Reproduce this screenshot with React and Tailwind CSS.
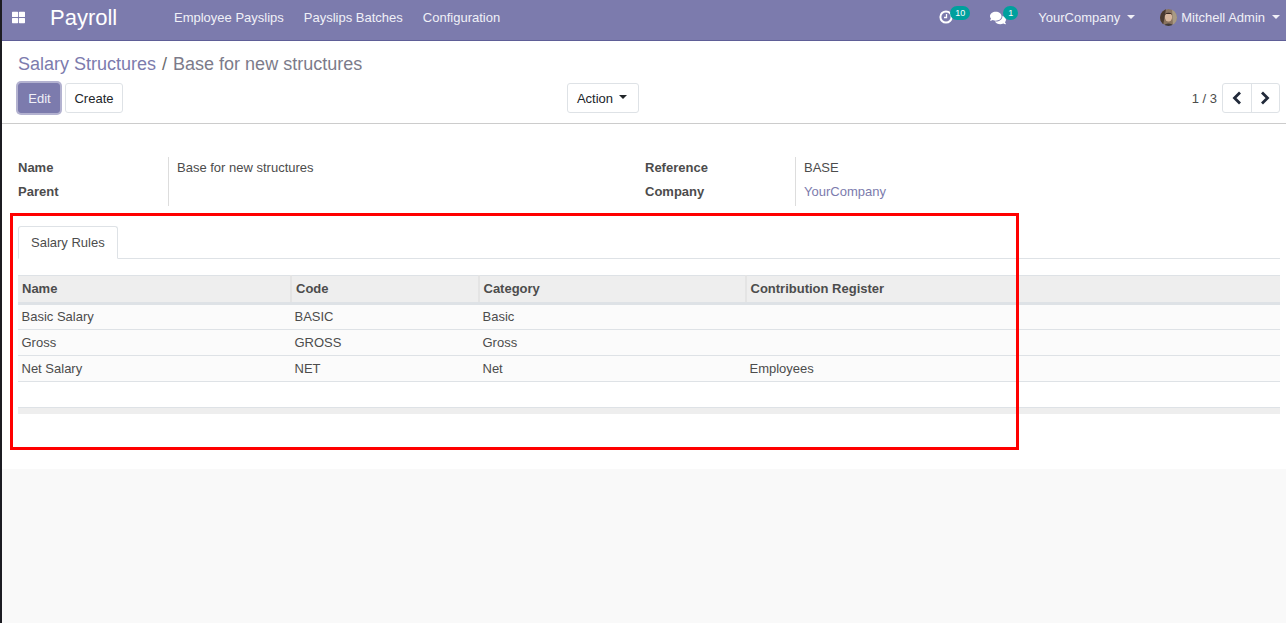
import React from 'react'
import { FaComments, FaThLarge } from 'react-icons/fa'

const rules = [
  { name: 'Basic Salary', code: 'BASIC', category: 'Basic', register: '' },
  { name: 'Gross', code: 'GROSS', category: 'Gross', register: '' },
  { name: 'Net Salary', code: 'NET', category: 'Net', register: 'Employees' },
]

function Caret() {
  return <span className="inline-block w-0 h-0 border-x-[4px] border-x-transparent border-t-[4px] border-t-current" />
}

function Avatar() {
  return (
    <svg width="17" height="17" viewBox="0 0 17 17" className="rounded-full">
      <circle cx="8.5" cy="8.5" r="8.5" fill="#8a7460" />
      <path d="M0 4 L4 0 L6 0 L3 17 L0 14Z" fill="#4a3a30" />
      <path d="M12 0 L17 3 L17 12 L13 17Z" fill="#a89a84" />
      <ellipse cx="8.5" cy="8" rx="3.6" ry="4.6" fill="#d8b8a0" />
      <path d="M4.8 6 C5 2.5 12 2.5 12.2 6 L11 5 L6 5Z" fill="#3a2a22" />
      <path d="M4 17 C4 13.5 13 13.5 13 17Z" fill="#3f3a3a" />
    </svg>
  )
}

function Clock() {
  return (
    <svg width="14" height="14" viewBox="0 0 14 14" fill="none" stroke="#fff" className="-mt-[1px]">
      <circle cx="7" cy="7" r="5.6" strokeWidth="2" />
      <path d="M7.5 4v3.5H5" strokeWidth="1.3" />
    </svg>
  )
}

function Chevron({ d }) {
  return (
    <svg width="12" height="14" viewBox="0 0 12 14" fill="none" stroke="currentColor" strokeWidth="2.8">
      <path d={d} />
    </svg>
  )
}

export default function App() {
  return (
    <div className="relative flex h-[623px] overflow-hidden bg-[#f9f9f9] text-[13px] leading-[20px] text-[#4c4c4c] font-['Liberation_Sans',Arial,sans-serif]">
      <div className="w-[2px] bg-[#1c1c22] shrink-0" />
      <div className="flex-1 min-w-0">
        <header className="h-[41px] pb-[5px] bg-[#7c7bad] border-b border-[#5f5e97] flex items-center text-white">
          <FaThLarge className="ml-[10px] w-[13px] h-[13px]" />
          <span className="ml-[25px] text-[22px] leading-[30px] w-[124px]">Payroll</span>
          <nav className="flex gap-[20px] text-[#f0f0f7]">
            <span>Employee Payslips</span>
            <span>Payslips Batches</span>
            <span>Configuration</span>
          </nav>
          <div className="ml-auto flex items-center text-[#f0f0f7]">
            <div className="relative w-[30px] h-[20px] flex items-center">
              <Clock />
              <span className="absolute left-[11px] -top-[2px] h-[14px] px-[5px] rounded-full bg-[#00a09d] text-white text-[9px] leading-[14px]">10</span>
            </div>
            <div className="relative ml-[21px] w-[27px] h-[20px] flex items-center">
              <FaComments className="w-[16px] h-[16px] text-white" />
              <span className="absolute left-[13px] -top-[2px] h-[14px] px-[5px] rounded-full bg-[#00a09d] text-white text-[9px] leading-[14px]">1</span>
            </div>
            <span className="ml-[21px]">YourCompany</span>
            <span className="ml-[7px] -mt-[2px] flex"><Caret /></span>
            <span className="ml-[25px] flex"><Avatar /></span>
            <span className="ml-[4px]">Mitchell Admin</span>
            <span className="ml-[7px] mr-[6px] -mt-[2px] flex"><Caret /></span>
          </div>
        </header>

        <div className="bg-white h-[428px]">
          <div className="h-[83px] border-b border-[#cccccc] pl-4 pr-[6px]">
            <div className="h-[42px] pt-[11px] text-[18px] leading-[24px] text-[#7c7b8a]">
              <span className="text-[#7c7bad]">Salary Structures</span>
              <span className="mx-[6px] text-[#6c6c6c]">/</span>
              <span>Base for new structures</span>
            </div>
            <div className="grid grid-cols-[549px_1fr_auto] items-center">
              <div className="flex gap-[5px]">
                <button className="h-[30px] w-[42px] pt-[1px] pl-[1px] rounded-[3px] bg-[#7c7bad] border border-[#7c7bad] text-[#f0f0f7] ring-[2px] ring-[#b3b2d0]">Edit</button>
                <button className="h-[30px] w-[58px] pt-[1px] rounded-[3px] bg-white border border-[#dee2e6] text-[#212529]">Create</button>
              </div>
              <div>
                <button className="h-[30px] w-[72px] pt-[1px] pr-[2px] rounded-[3px] bg-white border border-[#dee2e6] text-[#212529] flex items-center justify-center gap-[6px]">
                  Action
                  <span className="-mt-[3px] flex"><Caret /></span>
                </button>
              </div>
              <div className="flex items-center gap-[5px]">
                <span className="pt-[1px]">1 / 3</span>
                <div className="flex h-[30px] w-[58px] rounded-[3px] border border-[#dee2e6] text-[#212a3a]">
                  <span className="flex-1 flex items-center justify-center border-r border-[#dee2e6]"><Chevron d="M9 1.5 3.5 7 9 12.5" /></span>
                  <span className="flex-1 flex items-center justify-center"><Chevron d="M3 1.5 8.5 7 3 12.5" /></span>
                </div>
              </div>
            </div>
          </div>

          <div className="pl-4 pr-[6px]">
            <div className="pt-[33px] flex">
              <div className="w-[627px] grid grid-cols-[151px_1fr] grid-rows-[24px_25px]">
                <div className="pt-[1px] font-bold border-r border-[#dddddd]">Name</div>
                <div className="pt-[1px] pl-[8px]">Base for new structures</div>
                <div className="pt-[1px] font-bold border-r border-[#dddddd]">Parent</div>
                <div />
              </div>
              <div className="w-[300px] grid grid-cols-[151px_1fr] grid-rows-[24px_25px]">
                <div className="pt-[1px] font-bold border-r border-[#dddddd]">Reference</div>
                <div className="pt-[1px] pl-[8px]">BASE</div>
                <div className="pt-[1px] font-bold border-r border-[#dddddd]">Company</div>
                <div className="pt-[1px] pl-[8px] text-[#7c7bad]">YourCompany</div>
              </div>
            </div>

            <div className="mt-[20px] h-[33px] border-b border-[#dee2e6] flex">
              <div className="h-[33px] px-[12px] border border-b-white border-[#dee2e6] rounded-t-[3px] bg-white flex items-center">Salary Rules</div>
            </div>

            <table className="mt-[16px] w-full table-fixed border-collapse">
              <colgroup>
                <col className="w-[273px]" />
                <col className="w-[188px]" />
                <col className="w-[267px]" />
                <col />
              </colgroup>
              <thead>
                <tr className="h-[28px] bg-[#eeeeee] border-t border-b-[3px] border-[#dee2e6] font-bold">
                  <th className="text-left px-[4px] py-0 border-r-2 border-[#e4e4e4]">Name</th>
                  <th className="text-left px-[4px] py-0 border-r-2 border-[#e4e4e4]">Code</th>
                  <th className="text-left pl-[3.5px] pr-[4px] py-0 border-r-2 border-[#e4e4e4]">Category</th>
                  <th className="text-left pl-[3.5px] pr-[4px] py-0">Contribution Register</th>
                </tr>
              </thead>
              <tbody>
                {rules.map((r) => (
                  <tr key={r.code} className="h-[26px] bg-[#fbfbfb] border-b border-[#dee2e6]">
                    <td className="pl-[3.5px] pr-[4px] py-0">{r.name}</td>
                    <td className="pl-[3.5px] pr-[4px] py-0">{r.code}</td>
                    <td className="pl-[3.5px] pr-[4px] py-0">{r.category}</td>
                    <td className="pl-[3.5px] pr-[4px] py-0">{r.register}</td>
                  </tr>
                ))}
                <tr className="h-[26px] bg-white">
                  <td colSpan={4} />
                </tr>
              </tbody>
              <tfoot>
                <tr className="h-[6px] bg-[#eeeeee] border-t border-[#dee2e6]">
                  <td colSpan={4} className="p-0" />
                </tr>
              </tfoot>
            </table>
          </div>
        </div>
      </div>
      <div className="absolute left-[10px] top-[213px] w-[1009px] h-[237px] border-[3px] border-[#ff0000]" />
    </div>
  )
}
